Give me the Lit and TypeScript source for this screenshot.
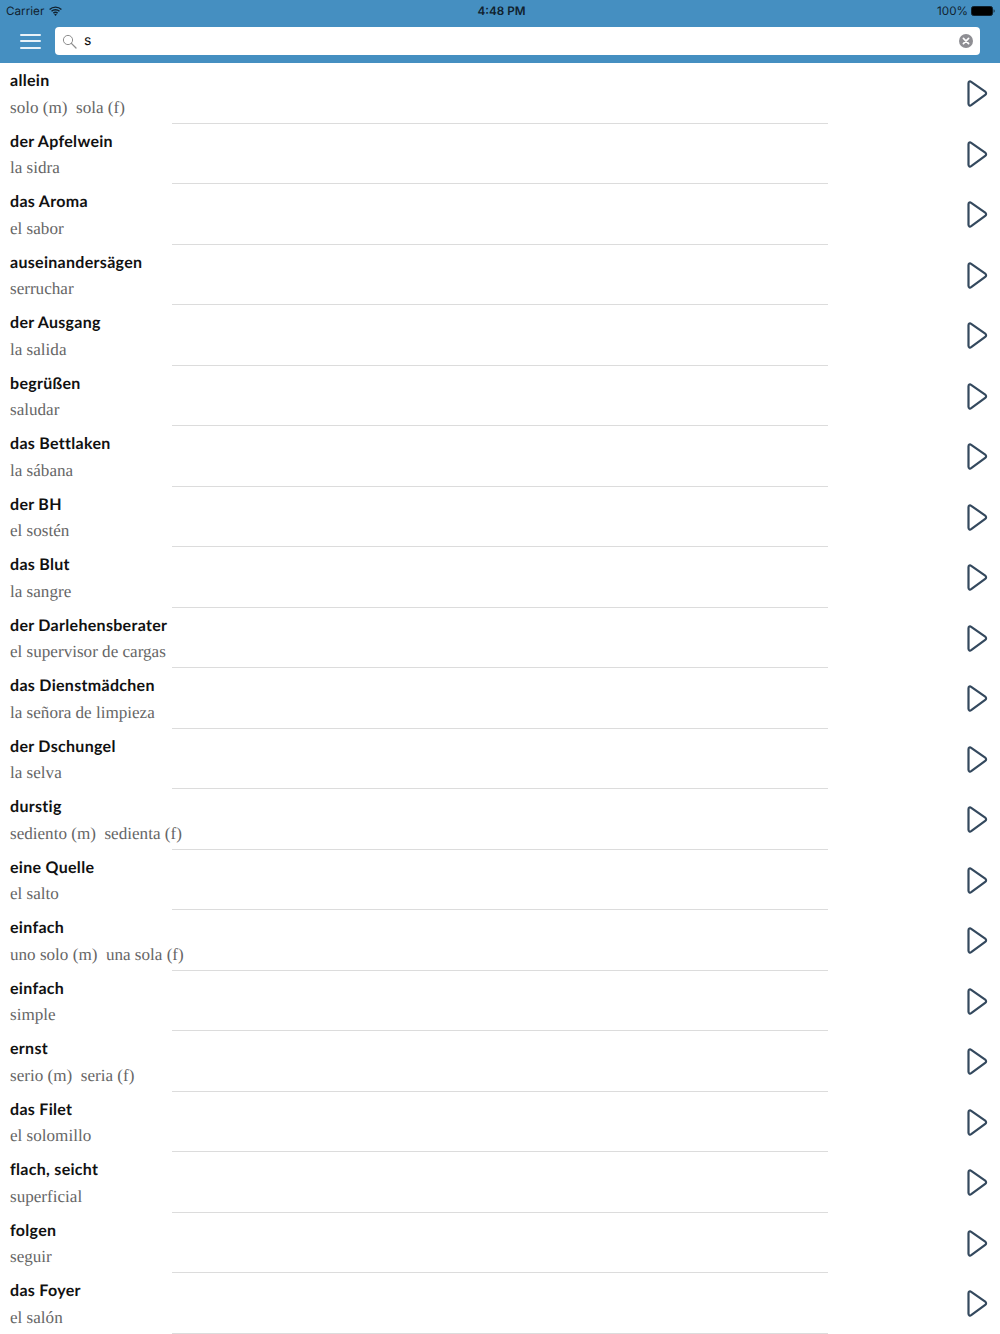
import { LitElement, html, css, svg } from "lit";
import { customElement } from "lit/decorators.js";

const ROWS: [string, string][] = [
  ["allein", "solo (m)\u00a0 sola (f)"],
  ["der Apfelwein", "la sidra"],
  ["das Aroma", "el sabor"],
  ["auseinandersägen", "serruchar"],
  ["der Ausgang", "la salida"],
  ["begrüßen", "saludar"],
  ["das Bettlaken", "la sábana"],
  ["der BH", "el sostén"],
  ["das Blut", "la sangre"],
  ["der Darlehensberater", "el supervisor de cargas"],
  ["das Dienstmädchen", "la señora de limpieza"],
  ["der Dschungel", "la selva"],
  ["durstig", "sediento (m)\u00a0 sedienta (f)"],
  ["eine Quelle", "el salto"],
  ["einfach", "uno solo (m)\u00a0 una sola (f)"],
  ["einfach", "simple"],
  ["ernst", "serio (m)\u00a0 seria (f)"],
  ["das Filet", "el solomillo"],
  ["flach, seicht", "superficial"],
  ["folgen", "seguir"],
  ["das Foyer", "el salón"],
];

const play = svg`<path d="M2.5 3.2 C2.5 1.6 4 1 5.2 1.8 L19.2 11.6 C20.4 12.5 20.4 14 19.2 14.9 L5.2 25.2 C4 26 2.5 25.4 2.5 23.8 Z" fill="none" stroke="#34495e" stroke-width="2.2" stroke-linejoin="round"/>`;

@customElement("app-root")
export class AppRoot extends LitElement {
  static styles = css`
    :host { display: block; width: 1000px; height: 1334px; overflow: hidden; background: #fff; text-rendering: geometricPrecision; }
    .head { background: #458fc1; height: 63px; box-sizing: border-box; }
    .status { height: 20px; padding: 1px 5px 0 6px; box-sizing: border-box; display: grid; grid-template-columns: 1fr auto 1fr; align-items: center;
      font: 11.7px Inter, "Liberation Sans", Arial, sans-serif; color: #10212e; }
    .left, .right { display: flex; align-items: center; gap: 5px; }
    .right { justify-content: flex-end; gap: 3px; }
    .time { font-weight: 600; margin-left: 2px; }
    .bar { display: flex; align-items: center; height: 28px; margin-top: 7px; padding: 0 20px; gap: 14px; }
    .burger { display: flex; flex-direction: column; gap: 4.5px; width: 21px; flex: none; }
    .burger i { display: block; height: 2px; background: #e9f2f8; border-radius: 1px; }
    .search { flex: 1; height: 28px; background: #fff; border-radius: 4px; display: flex; align-items: center; padding: 0 7px; }
    .search span { flex: 1; margin-left: 7px; margin-bottom: 1px; font: 14px Inter, "Liberation Sans", Arial, sans-serif; color: #111; }
    .row { height: 60.5px; box-sizing: border-box; position: relative; }
    .de { position: absolute; top: 8px; left: 10px; font: 700 16px/20px Lato, "Open Sans", sans-serif; letter-spacing: .3px; color: #111; white-space: nowrap; }
    .es { position: absolute; top: 34.5px; left: 10px; font: 17.1px/20px "Liberation Serif", Georgia, serif; color: #666; white-space: pre; }
    .sep { position: absolute; left: 172px; width: 656px; bottom: 0; height: 1px; background: #dcdcdc; }
    .play { position: absolute; right: 12px; top: 17px; width: 22px; height: 28px; }
  `;

  render() {
    return html`
      <div class="head">
        <div class="status">
          <div class="left">Carrier
            <svg width="13" height="10" viewBox="0 0 13 10"><path d="M.6 3.4C3.8.3 9.2.3 12.4 3.4M2.5 5.3c2.2-2 5.8-2 8 0M4.4 7.1c1.2-1 3-1 4.2 0" fill="none" stroke="#10212e" stroke-width="1.4"/><path d="M6.5 10 5.2 8.4c.7-.6 1.9-.6 2.6 0Z" fill="#10212e"/></svg>
          </div>
          <div class="time">4:48 PM</div>
          <div class="right">100%
            <svg width="24" height="10" viewBox="0 0 24 10"><rect x=".5" y=".5" width="21" height="9" rx="2" fill="#000" stroke="#10212e"/><path d="M22.6 3.2c.8.2 1 1 1 1.8s-.2 1.6-1 1.8Z" fill="#10212e"/></svg>
          </div>
        </div>
        <div class="bar">
          <div class="burger"><i></i><i></i><i></i></div>
          <div class="search">
            <svg width="15" height="15" viewBox="0 0 15 15"><circle cx="6" cy="6" r="4.6" fill="none" stroke="#8e8e8e" stroke-width="1"/><path d="M9.4 9.4 14 14" stroke="#8e8e8e" stroke-width="1.3" stroke-linecap="round"/></svg>
            <span>s</span>
            <svg width="14" height="14" viewBox="0 0 14 14"><circle cx="7" cy="7" r="7" fill="#8e8e93"/><path d="M4.4 4.4 9.6 9.6M9.6 4.4 4.4 9.6" stroke="#fff" stroke-width="1.7" stroke-linecap="round"/></svg>
          </div>
        </div>
      </div>
      ${ROWS.map(([de, es]) => html`
        <div class="row">
          <div class="de">${de}</div>
          <div class="es">${es}</div>
          <div class="sep"></div>
          <svg class="play" viewBox="0 0 22 28">${play}</svg>
        </div>`)}
    `;
  }
}
